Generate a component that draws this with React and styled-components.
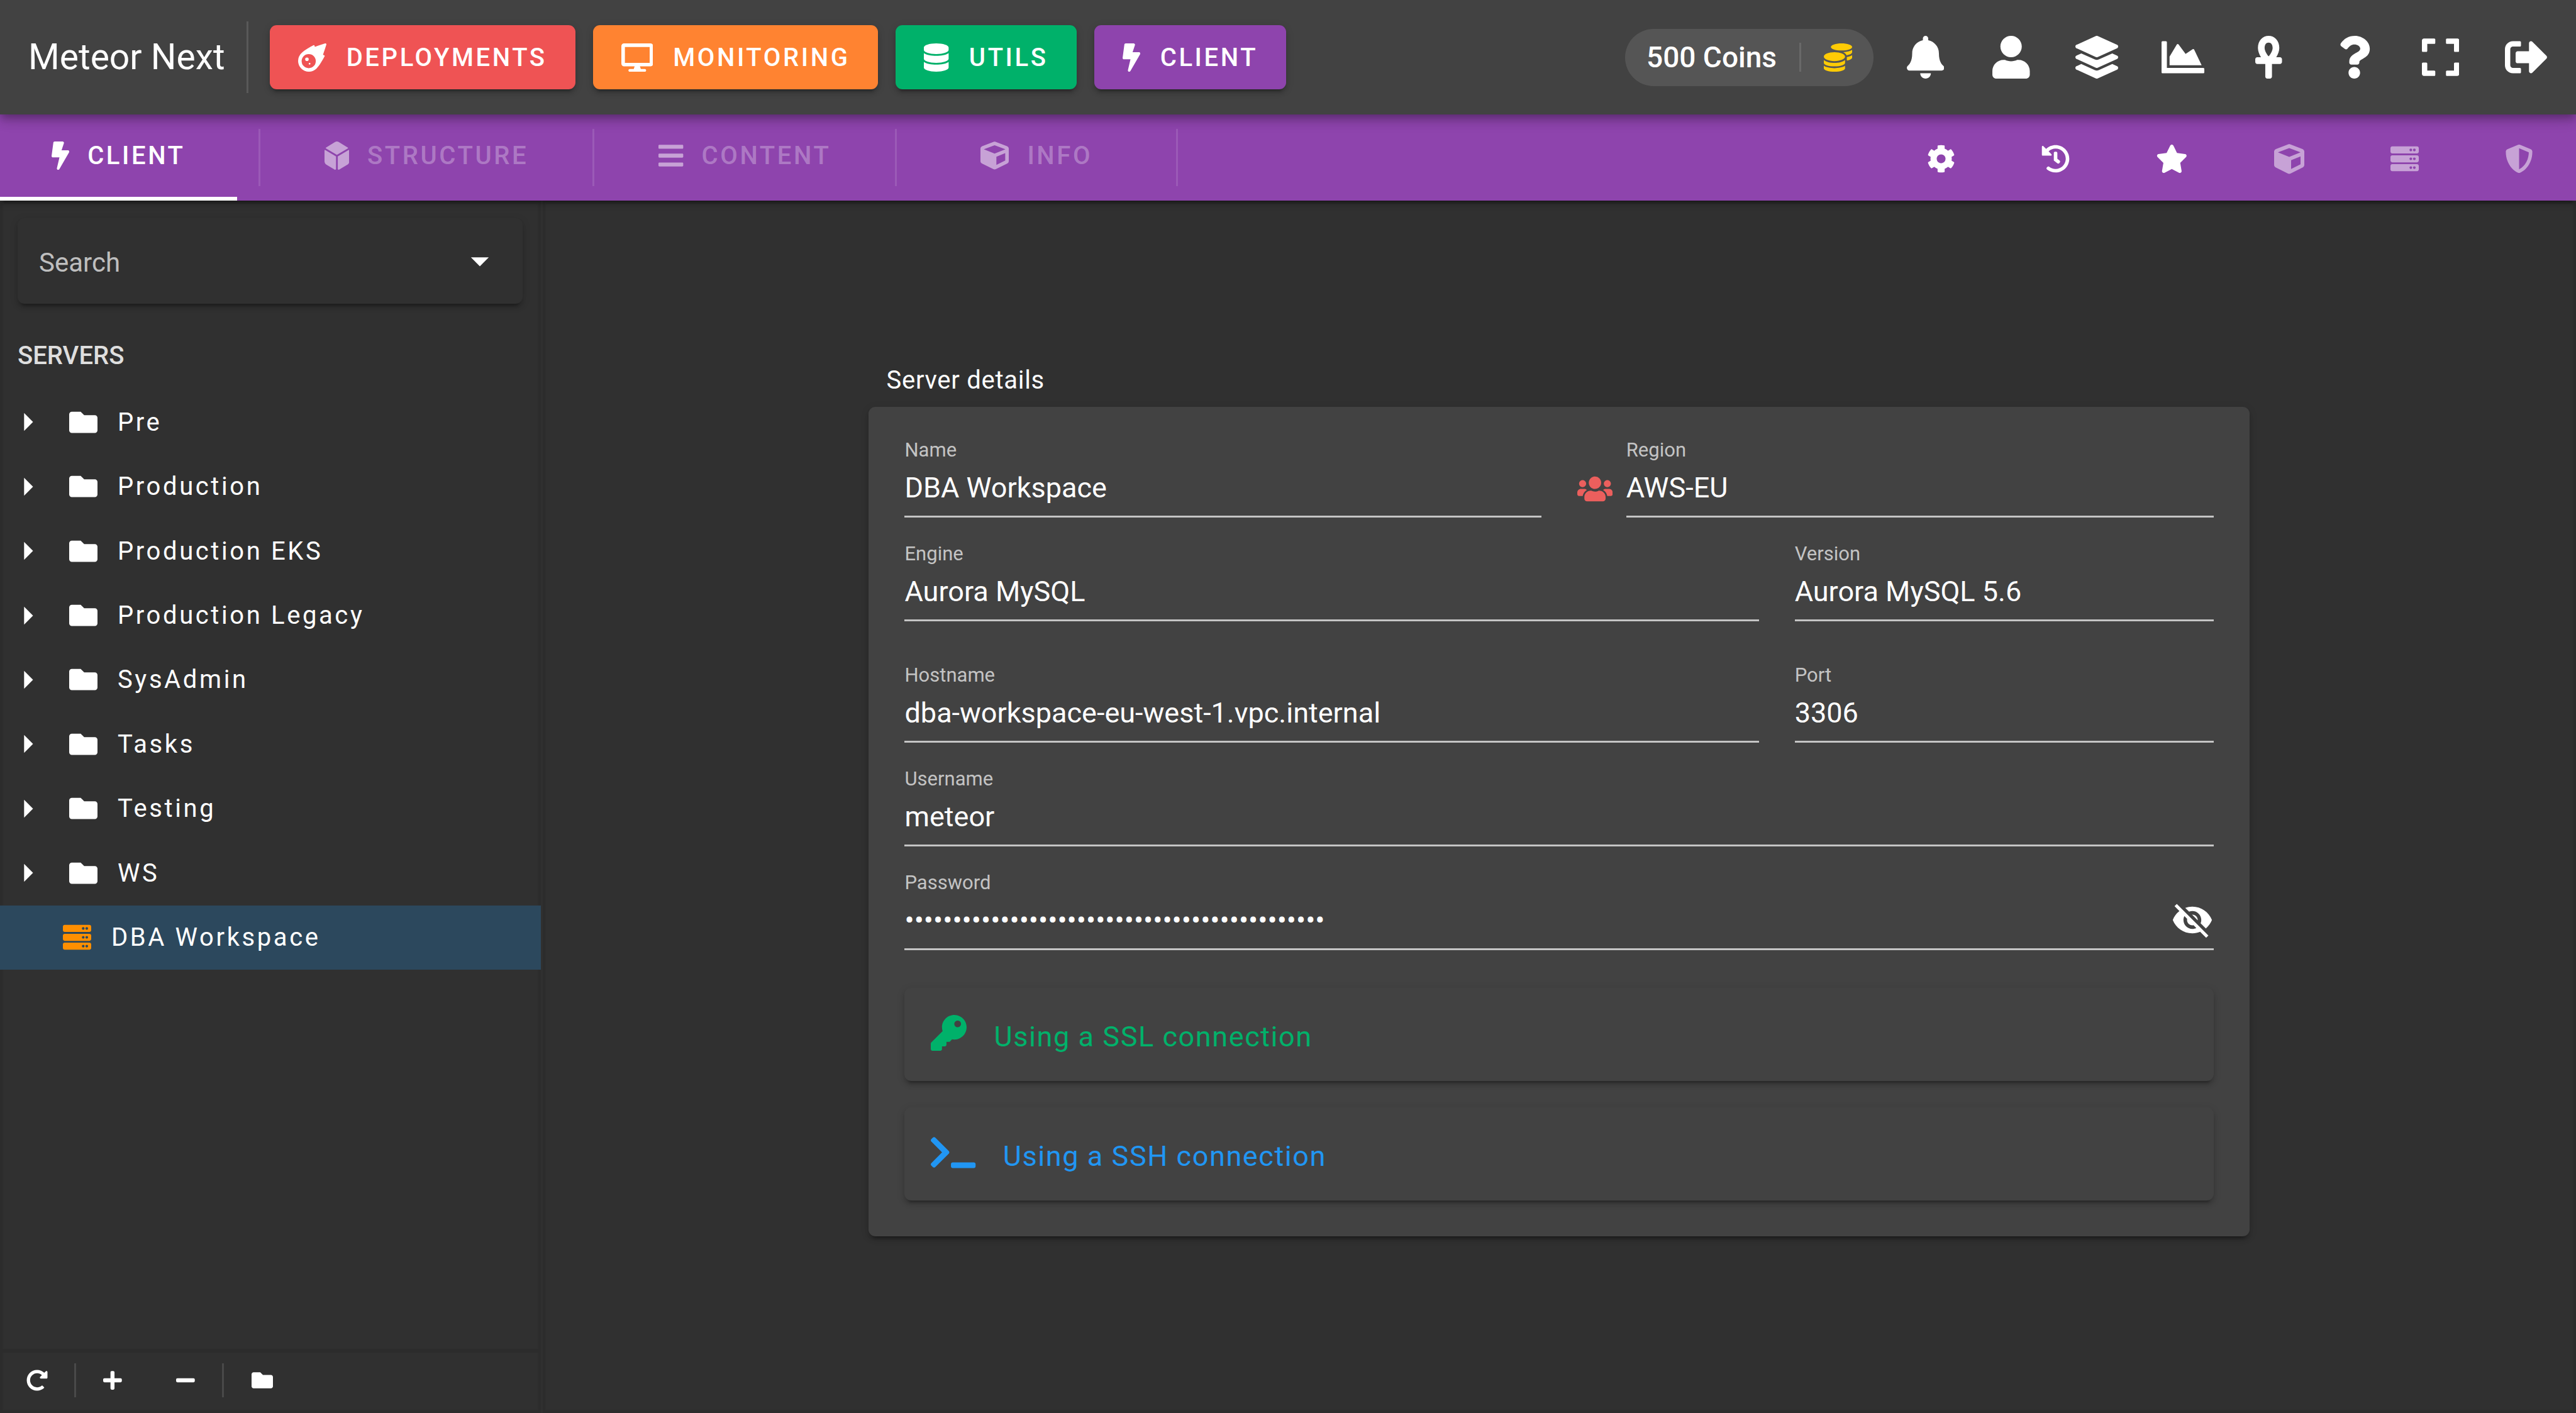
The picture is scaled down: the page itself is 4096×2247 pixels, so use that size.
import React from "react";
import styled, { createGlobalStyle } from "styled-components";
import { IconContext } from "react-icons";
import {
  FaMeteor, FaDesktop, FaDatabase, FaBolt, FaCoins, FaBell, FaUser, FaLayerGroup,
  FaChartArea, FaAnkh, FaQuestion, FaExpand, FaSignOutAlt, FaDiceD6, FaBars, FaCube,
  FaCog, FaHistory, FaStar, FaServer, FaShieldAlt, FaFolder, FaRedoAlt, FaPlus, FaMinus,
  FaUsers, FaKey, FaTerminal,
} from "react-icons/fa";
import { MdArrowDropDown, MdArrowRight, MdVisibilityOff } from "react-icons/md";

const elevation2 =
  "0 9px 3px -6px rgba(0,0,0,.2), 0 6px 6px 0 rgba(0,0,0,.14), 0 3px 14px 0 rgba(0,0,0,.12)";
const elevation4 =
  "0 6px 11px -3px rgba(0,0,0,.2), 0 11px 14px 0 rgba(0,0,0,.14), 0 3px 28px 0 rgba(0,0,0,.12)";
const paneEdge = "inset 0 0 3px 4px rgba(0,0,0,.08)";

const GlobalStyle = createGlobalStyle`
  *, *::before, *::after { box-sizing: border-box; }
  body { margin: 0; background: #303030; color: #fff; font-family: Roboto, "Liberation Sans", sans-serif; }
  button, input { font: inherit; color: inherit; background: none; border: 0; padding: 0; margin: 0; outline: 0; }
`;

/* Icons keep their own proportions: only the height is set. */
const Icon = styled.span`
  display: block;
  flex: none;
  color: ${(p) => p.$color || "inherit"};
  svg { display: block; width: auto; height: ${(p) => p.$size}px; }
`;

const Page = styled.div`
  display: flex;
  flex-direction: column;
  min-height: 100vh;
`;

/* Top bar */
const TopBar = styled.header`
  position: relative;
  z-index: 3;
  display: flex;
  align-items: center;
  height: 182px;
  padding: 0 11px 0 45px;
  background: #424242;
  box-shadow: ${elevation4};
`;
const Brand = styled.h1`
  margin: 0 34px 0 0;
  font-size: 57px;
  font-weight: 400;
  line-height: 80px;
`;
const Divider = styled.span`
  flex: none;
  width: 3px;
  height: ${(p) => p.$height}px;
  background: rgba(255, 255, 255, 0.12);
`;
const AppNav = styled.nav`
  display: flex;
  gap: 28px;
  margin-left: 34px;
`;
const AppButton = styled.button`
  display: flex;
  align-items: center;
  gap: 32px;
  height: 102px;
  padding: 0 45px;
  border-radius: 11px;
  background: ${(p) => p.$color};
  box-shadow: ${elevation2};
  font-size: 40px;
  font-weight: 500;
  letter-spacing: 0.09em;
`;
const Spacer = styled.div`
  flex: 1;
`;
const Coins = styled.button`
  display: flex;
  align-items: center;
  gap: 36px;
  height: 91px;
  padding: 0 34px;
  border-radius: 46px;
  background: #555;
  font-size: 46px;
  font-weight: 500;
`;
const Actions = styled.div`
  display: grid;
  grid-template-columns: repeat(8, 1fr);
  width: 1092px;
  margin-left: 14px;
`;
const IconButton = styled.button`
  display: flex;
  align-items: center;
  justify-content: center;
  height: 136px;
`;

/* Section bar */
const SectionBar = styled.nav`
  position: relative;
  z-index: 2;
  display: flex;
  align-items: center;
  height: 137px;
  background: #8e44ad;
  box-shadow: ${elevation2};
`;
const Tab = styled.button`
  display: flex;
  align-items: center;
  gap: 29px;
  height: 137px;
  padding: 0 ${(p) => p.$pad}px;
  margin-right: ${(p) => (p.$active ? 34 : 0)}px;
  border-bottom: 6px solid ${(p) => (p.$active ? "#fff" : "transparent")};
  font-size: 40px;
  font-weight: 500;
  letter-spacing: 0.09em;
  color: ${(p) => (p.$active ? "#fff" : "rgba(255, 255, 255, 0.3)")};
`;
const Tools = styled.div`
  display: flex;
  align-items: center;
  gap: 1px;
`;
const Tool = styled.button`
  display: flex;
  padding: 4px 68px 0;
`;

/* Body */
const Body = styled.div`
  display: flex;
  flex: 1;
`;
const Sidebar = styled.aside`
  display: flex;
  flex-direction: column;
  flex: none;
  width: 860px;
  box-shadow: ${paneEdge};
`;
const SearchBox = styled.div`
  display: flex;
  align-items: center;
  height: 136px;
  margin: 28px 29px 0 28px;
  padding: 0 34px;
  border-radius: 11px;
  box-shadow: ${elevation2};
`;
const SearchInput = styled.input`
  flex: 1;
  min-width: 0;
  padding-top: 4px;
  font-size: 42px;
  &::placeholder { color: rgba(255, 255, 255, 0.7); opacity: 1; }
`;
const TreeTitle = styled.h2`
  margin: 53px 28px 24px;
  font-size: 40px;
  font-weight: 500;
  line-height: 60px;
  color: #dedede;
`;
const Tree = styled.ul`
  display: grid;
  grid-template-rows: repeat(9, 1fr);
  height: 922px;
  margin: 0;
  padding: 0;
  list-style: none;
`;
const TreeItem = styled.li`
  display: flex;
  background: ${(p) => (p.$selected ? "#2c485d" : "transparent")};
`;
const TreeButton = styled.button`
  display: flex;
  align-items: center;
  gap: 32px;
  flex: 1;
  padding-left: ${(p) => (p.$leaf ? 100 : 10)}px;
  font-size: 40px;
  letter-spacing: 0.09em;
`;
const SidebarFooter = styled.footer`
  display: flex;
  align-items: center;
  height: 102px;
  margin-top: auto;
  padding-bottom: 8px;
  border-top: 6px solid #2c2c2c;
`;
const FooterButton = styled.button`
  display: flex;
  justify-content: center;
  width: ${(p) => p.$width}px;
`;

const Main = styled.main`
  flex: 1;
  display: flex;
  flex-direction: column;
  align-items: center;
  padding: 250px 3px 0 2px;
  margin-left: 3px;
  box-shadow: ${paneEdge};
`;
const Details = styled.section`
  width: 68%;
`;
const DetailsTitle = styled.h2`
  margin: 0 28px;
  padding: 6px 0 12px;
  font-size: 40px;
  font-weight: 400;
  line-height: 60px;
  letter-spacing: 0.018em;
`;
const Card = styled.div`
  padding: 52px 57px 57px;
  border-radius: 11px;
  background: #424242;
  box-shadow: ${elevation2};
`;
const Row = styled.div`
  display: grid;
  grid-template-columns: ${(p) => p.$columns || "1fr"};
  gap: 57px;
  margin-bottom: ${(p) => (p.$last ? 60 : p.$loose ? 69 : 41)}px;
`;
const RegionCell = styled.div`
  display: flex;
  align-items: center;
  gap: 22px;
`;
const SharedIcon = styled(Icon)`
  padding-top: 32px;
`;
const Field = styled.label`
  display: block;
  flex: 1;
  border-bottom: 3px solid #c5c5c5;
  padding-bottom: 3px;
`;
const FieldLabel = styled.span`
  display: block;
  font-size: 31px;
  line-height: 34px;
  color: rgba(255, 255, 255, 0.7);
`;
const FieldLine = styled.span`
  display: flex;
  align-items: center;
`;
const FieldInput = styled.input`
  flex: 1;
  min-width: 0;
  height: 84px;
  font-size: 45px;
`;
const Reveal = styled.button`
  display: flex;
`;
const Notice = styled.button`
  display: flex;
  align-items: center;
  gap: 43px;
  width: 100%;
  height: 148px;
  padding: 0 42px 6px;
  border-radius: 11px;
  box-shadow: ${elevation2};
  font-size: 45px;
  letter-spacing: 0.035em;
  color: ${(p) => p.$color};
  & + & { margin-top: 42px; }
`;
const NoticeText = styled.span`
  padding-top: 12px;
`;

const apps = [
  { name: "DEPLOYMENTS", color: "#ef5354", icon: FaMeteor },
  { name: "MONITORING", color: "#ff8331", icon: FaDesktop },
  { name: "UTILS", color: "#00b16a", icon: FaDatabase },
  { name: "CLIENT", color: "#8e44ad", icon: FaBolt },
];
const actions = [
  ["Notifications", FaBell], ["Profile", FaUser], ["Groups", FaLayerGroup], ["Statistics", FaChartArea],
  ["Ankh", FaAnkh], ["Help", FaQuestion], ["Fullscreen", FaExpand], ["Sign out", FaSignOutAlt],
];
const tabs = [
  { name: "CLIENT", icon: FaBolt, pad: 82, active: true },
  { name: "STRUCTURE", icon: FaDiceD6, pad: 102 },
  { name: "CONTENT", icon: FaBars, pad: 102 },
  { name: "INFO", icon: FaCube, pad: 133 },
];
const tools = [
  { name: "Settings", icon: FaCog, size: 45 },
  { name: "History", icon: FaHistory, size: 45 },
  { name: "Saved", icon: FaStar, size: 45 },
  { name: "Objects", icon: FaCube, size: 48, dim: true },
  { name: "Processes", icon: FaServer, size: 45, dim: true },
  { name: "Rights", icon: FaShieldAlt, size: 45, dim: true },
];
const folders = ["Pre", "Production", "Production EKS", "Production Legacy", "SysAdmin", "Tasks", "Testing", "WS"];

function TextField({ label, value, type = "text", children }) {
  return (
    <Field>
      <FieldLabel>{label}</FieldLabel>
      <FieldLine>
        <FieldInput type={type} defaultValue={value} readOnly />
        {children}
      </FieldLine>
    </Field>
  );
}

export default function App() {
  return (
    <IconContext.Provider value={{ size: "100%" }}>
      <Page>
        <GlobalStyle />
        <TopBar>
          <Brand>Meteor Next</Brand>
          <Divider $height={114} />
          <AppNav>
            {apps.map(({ name, color, icon: Glyph }) => (
              <AppButton key={name} $color={color}>
                <Icon $size={45}><Glyph /></Icon>
                {name}
              </AppButton>
            ))}
          </AppNav>
          <Spacer />
          <Coins>
            500 Coins
            <Divider $height={46} />
            <Icon $size={45} $color="#ffcb05"><FaCoins /></Icon>
          </Coins>
          <Actions>
            {actions.map(([name, Glyph]) => (
              <IconButton key={name} aria-label={name}>
                <Icon $size={68}><Glyph /></Icon>
              </IconButton>
            ))}
          </Actions>
        </TopBar>

        <SectionBar>
          {tabs.map(({ name, icon: Glyph, pad, active }) => (
            <React.Fragment key={name}>
              <Tab $pad={pad} $active={active}>
                <Icon $size={45} $color={active ? "#fff" : "rgba(255, 255, 255, 0.5)"}><Glyph /></Icon>
                {name}
              </Tab>
              <Divider $height={91} />
            </React.Fragment>
          ))}
          <Spacer />
          <Tools>
            {tools.map(({ name, icon: Glyph, size, dim }) => (
              <Tool key={name} aria-label={name}>
                <Icon $size={size} $color={dim ? "rgba(255, 255, 255, 0.5)" : "#fff"}><Glyph /></Icon>
              </Tool>
            ))}
          </Tools>
        </SectionBar>

        <Body>
          <Sidebar>
            <SearchBox>
              <SearchInput placeholder="Search" aria-label="Search" />
              <Icon $size={68}><MdArrowDropDown /></Icon>
            </SearchBox>
            <TreeTitle>SERVERS</TreeTitle>
            <Tree>
              {folders.map((name) => (
                <TreeItem key={name}>
                  <TreeButton>
                    <Icon $size={68}><MdArrowRight /></Icon>
                    <Icon $size={45}><FaFolder /></Icon>
                    {name}
                  </TreeButton>
                </TreeItem>
              ))}
              <TreeItem $selected>
                <TreeButton $leaf>
                  <Icon $size={45} $color="#ff8f00"><FaServer /></Icon>
                  DBA Workspace
                </TreeButton>
              </TreeItem>
            </Tree>
            <SidebarFooter>
              <FooterButton $width={118} aria-label="Refresh"><Icon $size={34}><FaRedoAlt /></Icon></FooterButton>
              <Divider $height={54} />
              <FooterButton $width={116} aria-label="Add"><Icon $size={34}><FaPlus /></Icon></FooterButton>
              <FooterButton $width={116} aria-label="Remove"><Icon $size={34}><FaMinus /></Icon></FooterButton>
              <Divider $height={54} />
              <FooterButton $width={122} aria-label="New folder"><Icon $size={34}><FaFolder /></Icon></FooterButton>
            </SidebarFooter>
          </Sidebar>

          <Main>
            <Details>
              <DetailsTitle>Server details</DetailsTitle>
              <Card>
                <Row $columns="1fr 1fr">
                  <TextField label="Name" value="DBA Workspace" />
                  <RegionCell>
                    <SharedIcon $size={45} $color="#eb5f5d"><FaUsers /></SharedIcon>
                    <TextField label="Region" value="AWS-EU" />
                  </RegionCell>
                </Row>
                <Row $columns="51fr 25fr" $loose>
                  <TextField label="Engine" value="Aurora MySQL" />
                  <TextField label="Version" value="Aurora MySQL 5.6" />
                </Row>
                <Row $columns="51fr 25fr">
                  <TextField label="Hostname" value="dba-workspace-eu-west-1.vpc.internal" />
                  <TextField label="Port" value="3306" />
                </Row>
                <Row>
                  <TextField label="Username" value="meteor" />
                </Row>
                <Row $last>
                  <TextField label="Password" type="password" value={"x".repeat(44)}>
                    <Reveal aria-label="Show password"><Icon $size={68}><MdVisibilityOff /></Icon></Reveal>
                  </TextField>
                </Row>
                <Notice $color="#00b16a">
                  <Icon $size={57}><FaKey /></Icon>
                  <NoticeText>Using a SSL connection</NoticeText>
                </Notice>
                <Notice $color="#2196f3">
                  <Icon $size={57}><FaTerminal /></Icon>
                  <NoticeText>Using a SSH connection</NoticeText>
                </Notice>
              </Card>
            </Details>
          </Main>
        </Body>
      </Page>
    </IconContext.Provider>
  );
}
